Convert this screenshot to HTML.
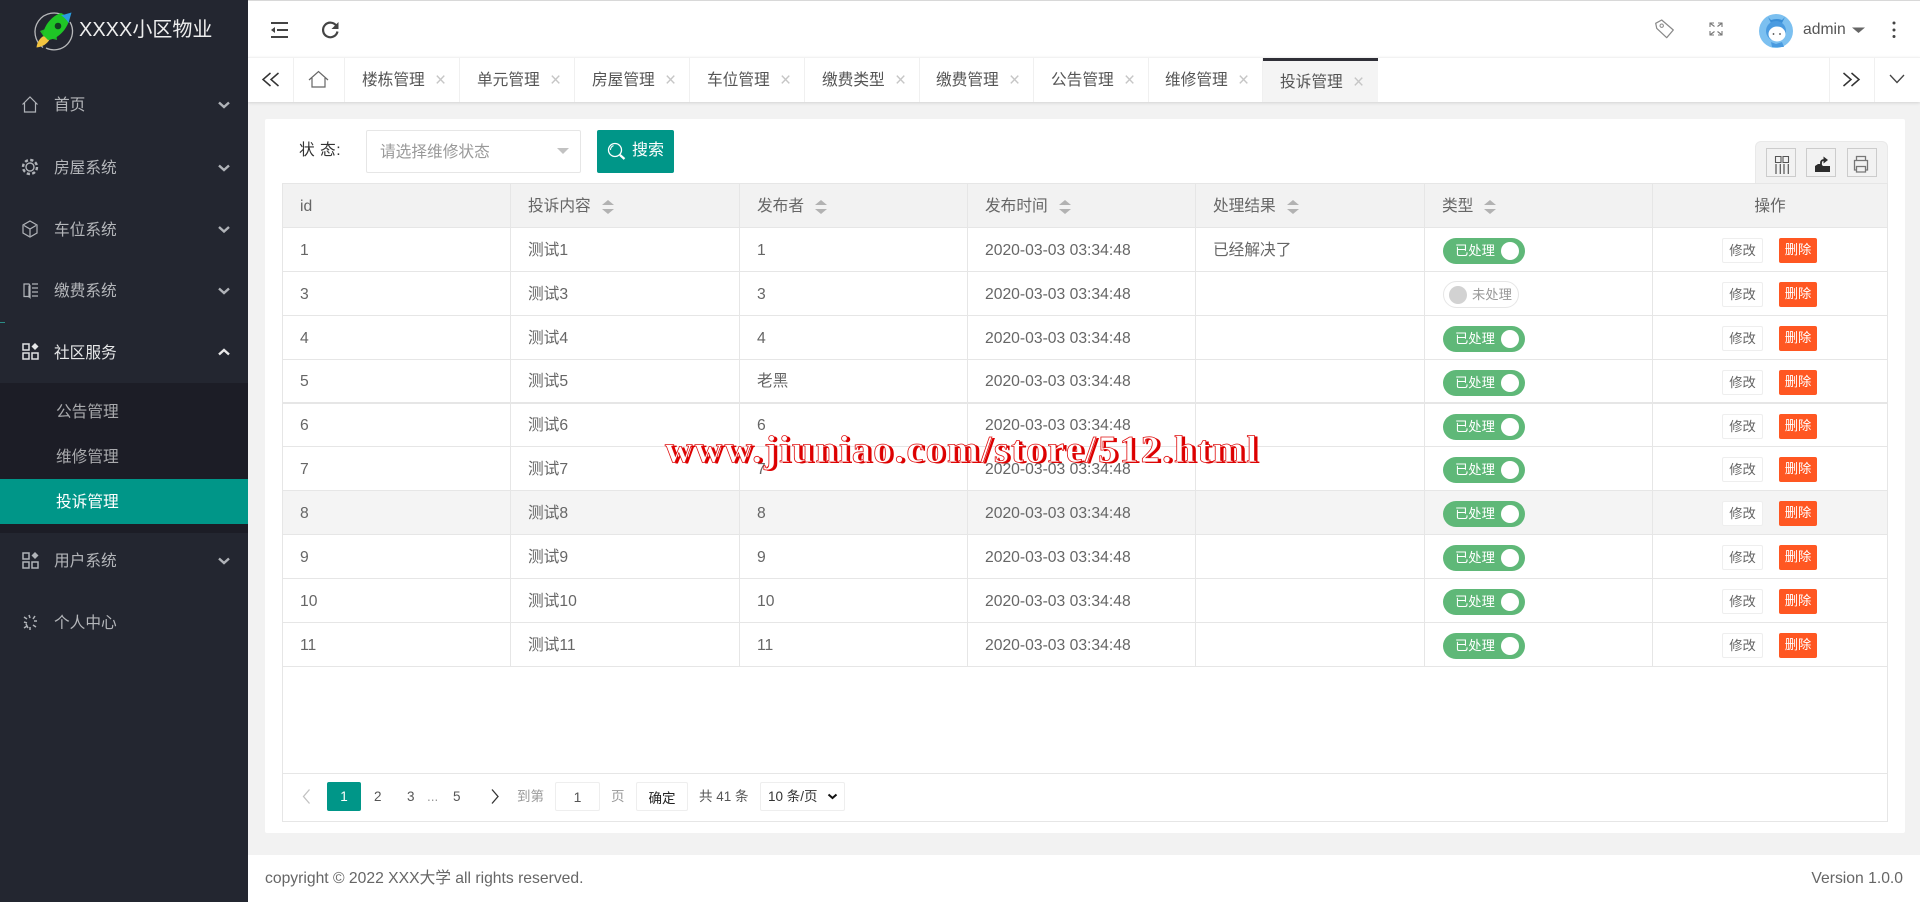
<!DOCTYPE html>
<html lang="zh"><head><meta charset="utf-8"><title>XXXX小区物业</title>
<style>
*{box-sizing:border-box}
html,body{margin:0;padding:0;width:1920px;height:902px;overflow:hidden;background:#f2f2f2}
body{font:15.7px/1 "Liberation Sans","Noto Sans CJK SC",sans-serif;color:#666;position:relative}
.a{position:absolute;white-space:nowrap}
svg{position:absolute;overflow:visible;fill:none}
.side{left:0;top:0;width:248px;height:902px;background:#232630}
.m{left:54px;color:#b4b6ba;font-size:15.7px;line-height:20px}
.sub{left:56px;color:#a9aaad;font-size:15.7px;line-height:20px}
.tab{top:58px;height:44px;line-height:46px;border-right:1px solid #f0f0f0;padding-left:17px;color:#555;width:115px}
.tab i{position:absolute;left:90px;top:0;font-style:normal;font-size:19px;color:#c6c6c6;font-weight:300}
.r{position:absolute;left:282px;width:1606px;display:grid;grid-template-columns:228px 229px 228px 228px 229px 228px 1fr;border-left:1px solid #e6e6e6;border-right:1px solid #e6e6e6;border-bottom:1px solid #e6e6e6;background:#fff}
.c{border-right:1px solid #e6e6e6;padding-left:17px;padding-top:2px;position:relative;display:flex;align-items:center;white-space:nowrap;color:#666}
.c:last-child{border-right:0}
.h{background:#f2f2f2;top:183px;height:45px;border-top:1px solid #e6e6e6}
.s{display:inline-block;position:relative;width:12px;height:14px;margin-left:11px}
.s:before,.s:after{content:"";position:absolute;left:0;border-left:6px solid transparent;border-right:6px solid transparent}
.s:before{top:0;border-bottom:5px solid #b2b2b2}
.s:after{bottom:0;border-top:5px solid #b2b2b2}
.on{position:absolute;left:18px;top:9.5px;width:82px;height:26px;border-radius:13px;background:#5fb878;color:#fff;font-size:13.3px;line-height:26px;padding-left:12px}
.on:after{content:"";position:absolute;right:6px;top:4px;width:18px;height:18px;border-radius:50%;background:#fff}
.off{position:absolute;left:18px;top:9px;width:76px;height:27px;border-radius:14px;border:1px solid #e6e6e6;background:#fff;color:#999;font-size:13.3px;line-height:25px;padding-left:28px}
.off:before{content:"";position:absolute;left:5px;top:3.5px;width:18px;height:18px;border-radius:50%;background:#d2d2d2}
.e{position:absolute;left:69px;top:10px;width:41px;height:25px;border:1px solid #eee;background:#fff;font-size:13.3px;line-height:24px;text-align:center;color:#666;border-radius:2px}
.d{position:absolute;left:126px;top:10px;width:38px;height:25px;background:#ff5722;font-size:13.3px;line-height:24px;text-align:center;color:#fff;border-radius:2px}
.pg{top:782px;height:29px;line-height:29px;font-size:13.5px;color:#666}
.box{border:1px solid #eee;background:#fff;border-radius:2px;text-align:center}
.tb{top:148px;width:30px;height:29px;border:1px solid #ccc;background:#f2f2f2}
</style></head><body>

<!-- top strip -->
<div class="a" style="left:248px;top:1px;width:1672px;height:56px;background:#fff"></div>
<div class="a" style="left:0;top:0;width:1920px;height:1px;background:#d8d8d8"></div>
<div class="a" style="left:248px;top:57px;width:1672px;height:45px;background:#fff;border-top:1px solid #f2f2f2;box-shadow:0 1px 3px rgba(0,0,0,.13)"></div>

<!-- sidebar -->
<div class="a side"></div>
<div class="a" style="left:0;top:383px;width:248px;height:150px;background:#1c1d26"></div>
<div class="a" style="left:0;top:479px;width:248px;height:45px;background:#009688"></div>
<div class="a" style="left:0;top:322px;width:5px;height:1px;background:#2b8c86"></div>

<svg style="left:0;top:0" width="90" height="60" viewBox="0 0 90 60">
<path d="M43 47.500A18.500 18.500 0 0 1 65 16.500M70 22A18.500 18.500 0 0 1 46 48" stroke="#b8b9bb" stroke-width="1.300"/>
<path d="M36.500 47.500c.5-5 3.500-10 8-12l5 4c-2 4-7 7.500-13 8z" fill="#f3c440"/>
<path d="M40 31l8-3-4 9zM57 40l-1-9-7 7z" fill="#1fb526"/>
<path d="M43 35c1-10 9-19 18-22 3 1 6 4 8 8-3 9-11 18-21 19z" fill="#1fc626"/>
<path d="M61 15.500l10.500-3-3 10.500c-1.500-3-4.500-6-7.500-7.500z" fill="#2a9be0"/>
<circle cx="58" cy="26" r="3.300" fill="#123f22"/>
</svg>
<div class="a" style="left:79px;top:19px;font-size:20px;line-height:22px;color:#eee">XXXX小区物业</div>

<div class="a m" style="top:96px">首页</div>
<div class="a m" style="top:159px">房屋系统</div>
<div class="a m" style="top:221px">车位系统</div>
<div class="a m" style="top:282px">缴费系统</div>
<div class="a m" style="top:344px;color:#e6e7e8">社区服务</div>
<div class="a sub" style="left:56px;top:403px">公告管理</div>
<div class="a sub" style="left:56px;top:448px">维修管理</div>
<div class="a sub" style="left:56px;top:493px;color:#fff">投诉管理</div>
<div class="a m" style="top:552px">用户系统</div>
<div class="a m" style="top:614px">个人中心</div>

<svg style="left:0;top:0" width="248" height="640" viewBox="0 0 248 640" stroke="#b0b3b8">
<g stroke-width="2.400">
<path d="M219 102.500l5 4.500 5-4.500"/><path d="M219 165.500l5 4.500 5-4.500"/><path d="M219 227l5 4.500 5-4.500"/><path d="M219 288.500l5 4.500 5-4.500"/><path d="M219 354.500l5-4.500 5 4.500" stroke="#e8e8e8"/><path d="M219 558.500l5 4.500 5-4.500"/>
</g>
<g stroke-width="1.200">
<path d="M22.500 104.500l7.500-7.500 7.500 7.500M24.500 103v9h11v-9"/>
<circle cx="30" cy="167" r="7" stroke-width="2.400" stroke-dasharray="3.200 2.300"/><circle cx="30" cy="167" r="4" stroke-width="1.400"/>
<path d="M30 221l7 4v8l-7 4-7-4v-8zM24 225.500l6 3.500 6-3.500M30 229v7"/>
<path d="M24 284h5l1 1.500v12l-1-1h-5zM29 285.500v12M32 284h6M32 288h6M32 292h6M32 296h6" />
</g>
<g stroke="#dfe0e2" stroke-width="1.500">
<rect x="23" y="344" width="6" height="6"/><rect x="23" y="353" width="6" height="6"/><rect x="32" y="353" width="6" height="6"/>
</g>
<path d="M35 343l3.500 3.500-3.500 3.500-3.500-3.500z" fill="#e6e7e8" stroke="none"/>
<g stroke-width="1.500">
<rect x="23" y="553" width="6" height="6"/><rect x="23" y="562" width="6" height="6"/><rect x="32" y="562" width="6" height="6"/>
</g>
<path d="M35 552l3.500 3.500-3.500 3.500-3.500-3.500z" fill="#b0b3b8" stroke="none"/>
<path d="M24 617l3 2M29 615l1 3M35 616l-2 3M37 621h-3M24 622l3 1M36 627l-3-2M24 628l3-2M30 630l0-3M26 624l2 4" stroke-width="1.500"/>
</svg>

<!-- header icons -->
<svg style="left:0;top:0" width="1920" height="102" viewBox="0 0 1920 102" stroke="#444">
<path d="M271 23h17M277 30h11M271 37h17" stroke-width="2"/><path d="M275 27v6l-4-3z" fill="#444" stroke="none"/>
<path d="M336.500 26a7.300 7.300 0 1 0 1 5.500" stroke-width="2.200"/><path d="M338.500 22v7h-7z" fill="#444" stroke="none"/>
<path d="M1655.700 23.300l6-3.300 11.600 10-6.600 7.700-10-9.400z" stroke="#888" stroke-width="1.200" stroke-linejoin="round"/><circle cx="1661.700" cy="25.700" r="1.700" stroke="#888"/>
<path d="M1710 27v-4h4M1722 27v-4h-4M1710 31v4h4M1722 31v4h-4M1710.500 23.500l4 3M1721.500 23.500l-4 3M1710.500 34.500l4-3M1721.500 34.500l-4-3" stroke="#777" stroke-width="1.100"/>
<circle cx="1776" cy="31" r="17" fill="#7cc0f0" stroke="none"/>
<path d="M1768 17l3 6h11l3-6-3 3q-5-2-11 0z" fill="#3a8fd8" stroke="none"/>
<circle cx="1776" cy="31" r="10" fill="#4a9be0" stroke="none"/>
<ellipse cx="1777" cy="34" rx="8.500" ry="7.500" fill="#fff" stroke="none"/>
<path d="M1771 42l5 2 6-2 2 5h-12z" fill="#4a9be0" stroke="none"/>
<circle cx="1773.500" cy="34" r=".9" fill="#444" stroke="none"/><circle cx="1780" cy="34" r=".9" fill="#444" stroke="none"/>
<path d="M1852 27.500h13l-6.500 5.500z" fill="#666" stroke="none"/>
<circle cx="1894" cy="23" r="1.500" fill="#444" stroke="none"/><circle cx="1894" cy="30" r="1.500" fill="#444" stroke="none"/><circle cx="1894" cy="36.500" r="1.500" fill="#444" stroke="none"/>
<path d="M270.500 73l-7.500 6.500 7.500 6.500M278.500 73l-7.500 6.500 7.500 6.500" stroke="#333" stroke-width="1.500"/>
<path d="M309 80l9.500-8.500 9.500 8.500M312 78v9h13v-9" stroke="#666" stroke-width="1.200"/>
<path d="M1843.500 73l7.500 6.500-7.500 6.500M1851.500 73l7.500 6.500-7.500 6.500" stroke="#333" stroke-width="1.500"/>
<path d="M1890 75l7 7.500 7-7.500" stroke="#444" stroke-width="1.300"/>
</svg>
<div class="a" style="left:1803px;top:21px;line-height:18px;color:#555">admin</div>

<!-- tabs -->
<div class="a" style="left:293px;top:58px;width:1px;height:44px;background:#f0f0f0"></div>
<div class="a" style="left:344px;top:58px;width:1px;height:44px;background:#f0f0f0"></div>
<div class="a tab" style="left:345px">楼栋管理<i>×</i></div>
<div class="a tab" style="left:460px">单元管理<i>×</i></div>
<div class="a tab" style="left:575px">房屋管理<i>×</i></div>
<div class="a tab" style="left:690px">车位管理<i>×</i></div>
<div class="a tab" style="left:805px">缴费类型<i>×</i></div>
<div class="a tab" style="left:919px">缴费管理<i>×</i></div>
<div class="a tab" style="left:1034px">公告管理<i>×</i></div>
<div class="a tab" style="left:1148px">维修管理<i>×</i></div>
<div class="a tab" style="left:1263px;background:#f4f4f4;border:0;border-top:3px solid #2f2f37;line-height:43px;width:115px">投诉管理<i>×</i></div>
<div class="a" style="left:1829px;top:58px;width:1px;height:44px;background:#f0f0f0"></div>
<div class="a" style="left:1874px;top:58px;width:1px;height:44px;background:#f0f0f0"></div>

<!-- card -->
<div class="a" style="left:265px;top:119px;width:1640px;height:714px;background:#fff;border-radius:2px"></div>
<div class="a" style="left:299px;top:142px;line-height:18px;color:#333;letter-spacing:.5px">状 态:</div>
<div class="a" style="left:366px;top:130px;width:215px;height:43px;border:1px solid #e6e6e6;border-radius:2px;line-height:43px;padding-left:13px;color:#999;background:#fff">请选择维修状态</div>
<div class="a" style="left:557px;top:148px;border-left:6px solid transparent;border-right:6px solid transparent;border-top:6px solid #c2c2c2"></div>
<div class="a" style="left:597px;top:130px;width:77px;height:43px;background:#009688;border-radius:2px;color:#fff;font-size:16px;line-height:42px;padding-left:35px">搜索</div>
<svg style="left:597px;top:130px" width="77" height="43" stroke="#fff"><circle cx="18" cy="20" r="6.500" stroke-width="1.300"/><path d="M13.500 20a5 5 0 0 1 3-4.500" stroke-width="1"/><path d="M23 25l4.500 4" stroke-width="2.200"/></svg>

<!-- toolbar -->
<div class="a" style="left:1755px;top:141px;width:133px;height:43px;background:#f2f2f2;border-radius:6px 6px 0 0;border:1px solid #e9e9e9;border-bottom:0"></div>
<div class="a tb" style="left:1766px"></div><div class="a tb" style="left:1806px"></div><div class="a tb" style="left:1847px"></div>
<svg style="left:0;top:0" width="1920" height="190" stroke="#555">
<path d="M1775.500 156.500h5.500v6h-5.500zM1783 156.500h5.500v6h-5.500z" stroke-width="1.100"/><path d="M1776 164v10M1780.300 164v10M1784 164v10M1788.300 164v10" stroke-width="1.200"/>
<path d="M1815 166l3-2h3l2 2h7v6h-15z" fill="#2c2c2c" stroke="none"/><path d="M1821 165v-2q0-3 3-3" stroke="#2c2c2c" stroke-width="1.800"/><path d="M1823.500 156.500l4.500 3.500-4.500 3.500z" fill="#2c2c2c" stroke="none"/>
<path d="M1856.500 160v-3.500h9v3.500M1856.500 170h-2v-9.500h13v9.500h-2M1856.500 166.500h9v5.500h-9z" stroke="#777" stroke-width="1.300"/>
</svg>

<!-- table -->
<div class="r h"><div class="c">id</div><div class="c">投诉内容<span class="s"></span></div><div class="c">发布者<span class="s"></span></div><div class="c">发布时间<span class="s"></span></div><div class="c">处理结果<span class="s"></span></div><div class="c">类型<span class="s"></span></div><div class="c" style="justify-content:center;padding-left:0">操作</div></div>

<div class="r" style="top:228px;height:44px"><div class="c">1</div><div class="c">测试1</div><div class="c">1</div><div class="c">2020-03-03 03:34:48</div><div class="c">已经解决了</div><div class="c"><div class="on">已处理</div></div><div class="c"><div class="e">修改</div><div class="d">删除</div></div></div>
<div class="r" style="top:272px;height:44px"><div class="c">3</div><div class="c">测试3</div><div class="c">3</div><div class="c">2020-03-03 03:34:48</div><div class="c"></div><div class="c"><div class="off">未处理</div></div><div class="c"><div class="e">修改</div><div class="d">删除</div></div></div>
<div class="r" style="top:316px;height:44px"><div class="c">4</div><div class="c">测试4</div><div class="c">4</div><div class="c">2020-03-03 03:34:48</div><div class="c"></div><div class="c"><div class="on">已处理</div></div><div class="c"><div class="e">修改</div><div class="d">删除</div></div></div>
<div class="r" style="top:360px;height:44px;border-bottom-width:2px"><div class="c">5</div><div class="c">测试5</div><div class="c">老黑</div><div class="c">2020-03-03 03:34:48</div><div class="c"></div><div class="c"><div class="on">已处理</div></div><div class="c"><div class="e">修改</div><div class="d">删除</div></div></div>
<div class="r" style="top:404px;height:43px"><div class="c">6</div><div class="c">测试6</div><div class="c">6</div><div class="c">2020-03-03 03:34:48</div><div class="c"></div><div class="c"><div class="on">已处理</div></div><div class="c"><div class="e">修改</div><div class="d">删除</div></div></div>
<div class="r" style="top:447px;height:44px"><div class="c">7</div><div class="c">测试7</div><div class="c">7</div><div class="c">2020-03-03 03:34:48</div><div class="c"></div><div class="c"><div class="on">已处理</div></div><div class="c"><div class="e">修改</div><div class="d">删除</div></div></div>
<div class="r" style="top:491px;height:44px;background:#f4f4f4"><div class="c">8</div><div class="c">测试8</div><div class="c">8</div><div class="c">2020-03-03 03:34:48</div><div class="c"></div><div class="c"><div class="on">已处理</div></div><div class="c"><div class="e">修改</div><div class="d">删除</div></div></div>
<div class="r" style="top:535px;height:44px"><div class="c">9</div><div class="c">测试9</div><div class="c">9</div><div class="c">2020-03-03 03:34:48</div><div class="c"></div><div class="c"><div class="on">已处理</div></div><div class="c"><div class="e">修改</div><div class="d">删除</div></div></div>
<div class="r" style="top:579px;height:44px"><div class="c">10</div><div class="c">测试10</div><div class="c">10</div><div class="c">2020-03-03 03:34:48</div><div class="c"></div><div class="c"><div class="on">已处理</div></div><div class="c"><div class="e">修改</div><div class="d">删除</div></div></div>
<div class="r" style="top:623px;height:44px"><div class="c">11</div><div class="c">测试11</div><div class="c">11</div><div class="c">2020-03-03 03:34:48</div><div class="c"></div><div class="c"><div class="on">已处理</div></div><div class="c"><div class="e">修改</div><div class="d">删除</div></div></div>

<div class="a" style="left:282px;top:667px;width:1606px;height:155px;border:1px solid #e6e6e6;border-top:0"></div>
<div class="a" style="left:282px;top:773px;width:1606px;height:1px;background:#e6e6e6"></div>

<!-- pagination -->
<svg style="left:0;top:770px" width="520" height="50"><path d="M309.500 19.500l-6 7 6 7" stroke="#c2c2c2" stroke-width="1.300"/><path d="M492 19.500l6 7-6 7" stroke="#333" stroke-width="1.300"/></svg>
<div class="a pg" style="left:327px;width:34px;background:#009688;color:#fff;text-align:center;border-radius:2px">1</div>
<div class="a pg" style="left:374px;color:#555">2</div>
<div class="a pg" style="left:407px;color:#555">3</div>
<div class="a pg" style="left:427px;color:#999">...</div>
<div class="a pg" style="left:453px;color:#555">5</div>
<div class="a pg" style="left:517px;color:#999">到第</div>
<div class="a pg box" style="left:555px;width:45px;color:#555;font-size:14px">1</div>
<div class="a pg" style="left:611px;color:#999">页</div>
<div class="a pg box" style="left:636px;width:52px;color:#222;line-height:31px">确定</div>
<div class="a pg" style="left:699px;color:#555">共 41 条</div>
<div class="a pg box" style="left:760px;width:85px;color:#333;text-align:left;padding-left:7px;line-height:27px">10 条/页</div>
<svg style="left:760px;top:782px" width="85" height="29"><path d="M68.500 12.500l4 3.500 4-3.500" stroke="#111" stroke-width="2"/></svg>

<!-- footer -->
<div class="a" style="left:0;top:855px;width:1920px;height:47px;background:#fff"></div>
<div class="a side" style="top:855px;height:47px"></div>
<div class="a" style="left:265px;top:870px;line-height:18px;color:#666">copyright © 2022 XXX大学 all rights reserved.</div>
<div class="a" style="right:17px;top:870px;line-height:18px;color:#666">Version 1.0.0</div>

<!-- watermark -->
<div class="a" style="left:665px;top:431px;font:bold 38px/38px 'Liberation Serif',serif;letter-spacing:2.350px;color:#fff;-webkit-text-stroke:.8px #e01010;text-shadow:3px 1px 0 #dc0000">www.jiuniao.com/store/512.html</div>

</body></html>
